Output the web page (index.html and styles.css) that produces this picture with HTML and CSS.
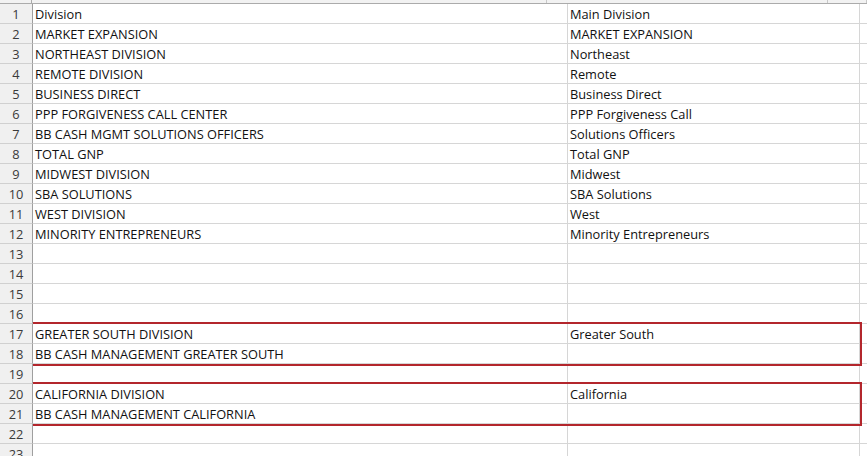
FILE: index.html
```html
<!DOCTYPE html>
<html>
<head>
<meta charset="utf-8">
<link rel="stylesheet" href="styles.css">
</head>
<body>
<div class="sheet">
  <div class="colhead"><div class="corner"></div><div class="ch a"></div><div class="ch b"></div><div class="ch c"></div></div>
  <div class="row"><div class="rh">1</div><div class="cell a">Division</div><div class="cell b">Main Division</div><div class="cell c"></div></div>
  <div class="row"><div class="rh">2</div><div class="cell a">MARKET EXPANSION</div><div class="cell b">MARKET EXPANSION</div><div class="cell c"></div></div>
  <div class="row"><div class="rh">3</div><div class="cell a">NORTHEAST DIVISION</div><div class="cell b">Northeast</div><div class="cell c"></div></div>
  <div class="row"><div class="rh">4</div><div class="cell a">REMOTE DIVISION</div><div class="cell b">Remote</div><div class="cell c"></div></div>
  <div class="row"><div class="rh">5</div><div class="cell a">BUSINESS DIRECT</div><div class="cell b">Business Direct</div><div class="cell c"></div></div>
  <div class="row"><div class="rh">6</div><div class="cell a">PPP FORGIVENESS CALL CENTER</div><div class="cell b">PPP Forgiveness Call</div><div class="cell c"></div></div>
  <div class="row"><div class="rh">7</div><div class="cell a">BB CASH MGMT SOLUTIONS OFFICERS</div><div class="cell b">Solutions Officers</div><div class="cell c"></div></div>
  <div class="row"><div class="rh">8</div><div class="cell a">TOTAL GNP</div><div class="cell b">Total GNP</div><div class="cell c"></div></div>
  <div class="row"><div class="rh">9</div><div class="cell a">MIDWEST DIVISION</div><div class="cell b">Midwest</div><div class="cell c"></div></div>
  <div class="row"><div class="rh">10</div><div class="cell a">SBA SOLUTIONS</div><div class="cell b">SBA Solutions</div><div class="cell c"></div></div>
  <div class="row"><div class="rh">11</div><div class="cell a">WEST DIVISION</div><div class="cell b">West</div><div class="cell c"></div></div>
  <div class="row"><div class="rh">12</div><div class="cell a">MINORITY ENTREPRENEURS</div><div class="cell b">Minority Entrepreneurs</div><div class="cell c"></div></div>
  <div class="row"><div class="rh">13</div><div class="cell a"></div><div class="cell b"></div><div class="cell c"></div></div>
  <div class="row"><div class="rh">14</div><div class="cell a"></div><div class="cell b"></div><div class="cell c"></div></div>
  <div class="row"><div class="rh">15</div><div class="cell a"></div><div class="cell b"></div><div class="cell c"></div></div>
  <div class="row"><div class="rh">16</div><div class="cell a"></div><div class="cell b"></div><div class="cell c"></div></div>
  <div class="hl">
    <div class="row"><div class="rh">17</div><div class="cell a">GREATER SOUTH DIVISION</div><div class="cell b">Greater South</div><div class="cell c"></div></div>
    <div class="row"><div class="rh">18</div><div class="cell a">BB CASH MANAGEMENT GREATER SOUTH</div><div class="cell b"></div><div class="cell c"></div></div>
  </div>
  <div class="row"><div class="rh">19</div><div class="cell a"></div><div class="cell b"></div><div class="cell c"></div></div>
  <div class="hl">
    <div class="row"><div class="rh">20</div><div class="cell a">CALIFORNIA DIVISION</div><div class="cell b">California</div><div class="cell c"></div></div>
    <div class="row"><div class="rh">21</div><div class="cell a">BB CASH MANAGEMENT CALIFORNIA</div><div class="cell b"></div><div class="cell c"></div></div>
  </div>
  <div class="row"><div class="rh">22</div><div class="cell a"></div><div class="cell b"></div><div class="cell c"></div></div>
  <div class="row"><div class="rh">23</div><div class="cell a"></div><div class="cell b"></div><div class="cell c"></div></div>
</div>
</body>
</html>
```
FILE: styles.css
```css
* { box-sizing: border-box; }
html, body { margin: 0; padding: 0; background: #ffffff; overflow: hidden; }
body { font-family: "Open Sans", "Liberation Sans", sans-serif; font-size: 12.8px; color: #111; }
.sheet { width: 867px; height: 456px; overflow: hidden; }
.colhead { display: flex; height: 4px; border-bottom: 1px solid #ababab; background: #f2f2f2; }
.corner { width: 33px; border-right: 1px solid #ababab; }
.ch { border-right: 1px solid #c8c8c8; }
.row { display: flex; height: 20px; }
.rh {
  width: 33px; flex: none; background: #f0f0f0; color: #3a3a3a;
  border-right: 1px solid #9f9f9f; border-bottom: 1px solid #d0d0d0;
  text-align: center; line-height: 20px; font-size: 12.8px;
}
.cell {
  flex: none; border-right: 1px solid #d6d6d6; border-bottom: 1px solid #d6d6d6;
  padding-left: 2px; line-height: 20px; white-space: nowrap; overflow: hidden;
}
.a { width: 535px; }
.b { width: 292px; }
.c { width: 40px; }
.hl { position: relative; }
.hl::after {
  content: ""; position: absolute; left: 33px; right: 5px; top: -2px; bottom: -2px;
  border-top: 2px solid #b3262c; border-right: 2px solid #b3262c; border-bottom: 2px solid #b3262c;
  pointer-events: none;
}
```
